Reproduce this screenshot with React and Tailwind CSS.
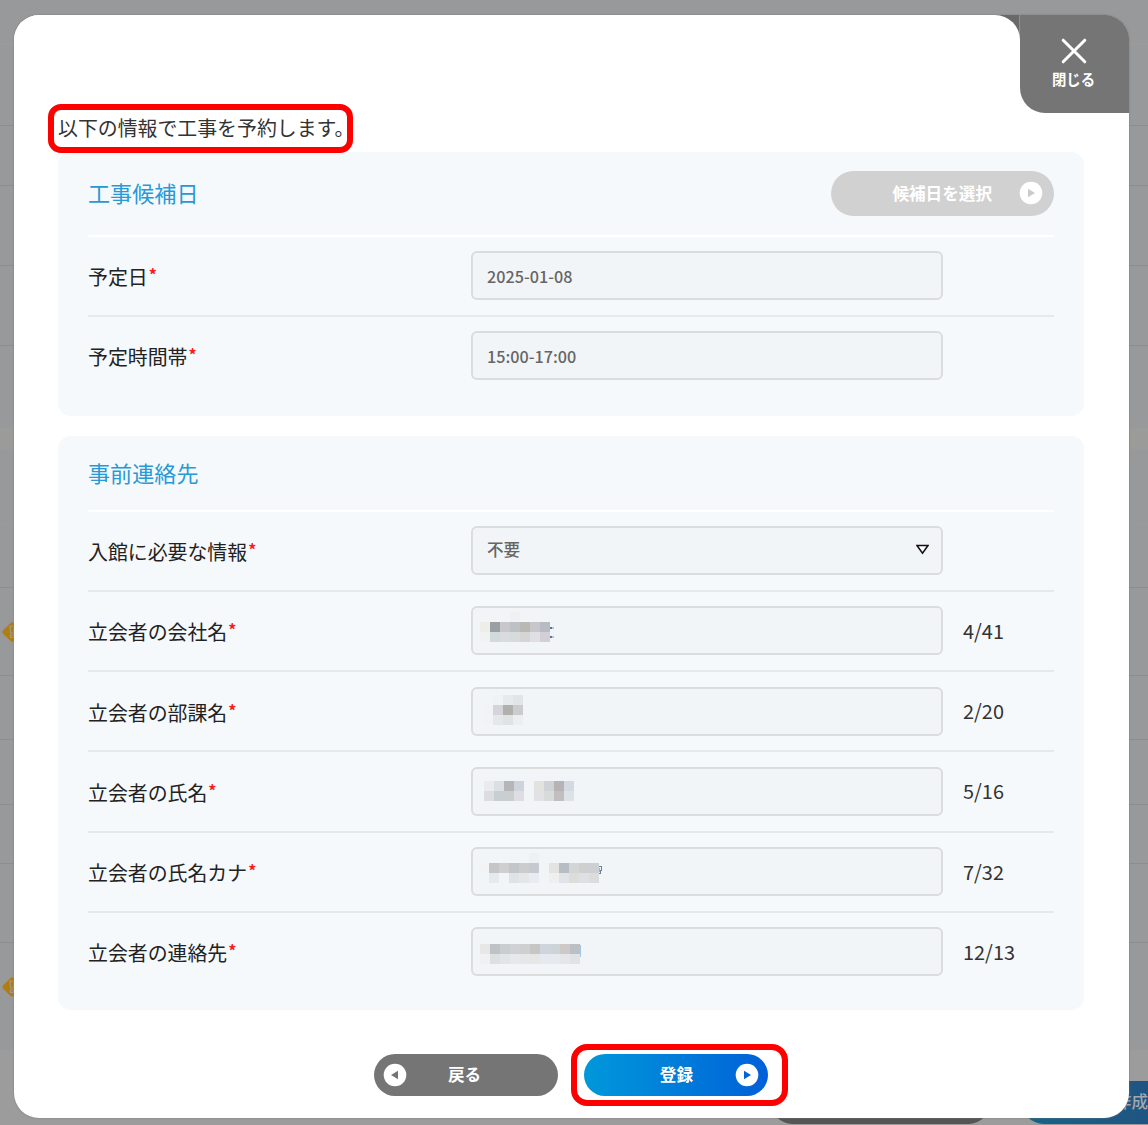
import React from 'react';

const backdropLines = [125, 185, 265, 345, 587, 675, 739, 804, 863, 942];

const Arrow = ({ left, color }) => (
  <svg width="24" height="24" viewBox="0 0 24 24" className="shrink-0">
    <circle cx="12" cy="12" r="11.3" fill="#fff" />
    <path d={left ? 'M8 12 L15 7.8 V16.2 Z' : 'M16 12 L9 7.8 V16.2 Z'} fill={color} />
  </svg>
);

const Warning = () => (
  <svg width="24" height="24" viewBox="0 0 24 24">
    <rect x="4.6" y="4.6" width="14.8" height="14.8" rx="2" transform="rotate(45 12 12)" fill="#b07d12" />
    <path d="M10 6h4l-.6 7h-2.8z M10.5 15h3v2.5h-3z" fill="none" stroke="#a29a86" strokeWidth="1.2" />
  </svg>
);

// Each mosaic row is a list of 10px cells; an empty string leaves the cell clear.
const company = {
  x: 7, y: 4,
  rows: [
    ['', '#f3f4f6', '', '#eef2f5', '', '', ''],
    ['#eeede8', '#9a9fa1', '#c8c8ca', '#bdc1c6', '#bab8b3', '#c7c7cb', '#b8bac4'],
    ['#f1f3f2', '#d4dadb', '#d8dcdc', '#d8dbdb', '#d5d6d4', '#e0e0e4', '#d2d0d6'],
  ],
  tail: (
    <>
      <path d="M70 15.5h3M70 24.5h3" stroke="#686f86" strokeWidth="2" />
      <path d="M72 15.5h1.5M72 24.5h2" stroke="#a8c9ed" strokeWidth="2" />
    </>
  ),
};
const department = {
  x: 10, y: 6,
  rows: [
    ['', '#f0f3f6', '#e7eaed', '#e1e5e8'],
    ['#f1f3f6', '#d5d4da', '#b0b0ad', '#c9cdce'],
    ['#f1f3f6', '#e4e8eb', '#dfe3e3', '#ebeff1'],
  ],
};
const person = {
  x: 11, y: 12,
  rows: [
    ['#e9ebed', '#dae0e3', '#b5b6b8', '#cfd3dc', '', '#e2e3df', '#cdd3d8', '#b6b3b2', '#d3dae2'],
    ['#dddde0', '#c9ced1', '#c9ced1', '#dddde3', '', '#e0e2e3', '#d7dbda', '#c1bebf', '#dce2e6'],
  ],
};
const kana = {
  x: 6, y: 4,
  rows: [
    ['', '', '', '', '', '#edf1f4', '', '', '', '', '', ''],
    ['#f1f3f5', '#c6c6c7', '#cfcfd1', '#c3c6c9', '#cbccce', '#c6c9cf', '', '#e3e3e1', '#b8bcc3', '#d4d6d6', '#d0cfd0', '#cdd0d2'],
    ['', '#e6eaed', '', '#dee3e6', '#e4e6e8', '#e8ebf1', '', '#eeefef', '#e0e4e8', '#dcdddb', '#dfe0e4', '#dddcdd'],
  ],
  tail: (
    <>
      <path d="M120 13.5h2.5v3l-2 5" fill="none" stroke="#71809b" strokeWidth="1.4" />
      <path d="M120.8 14.5v4" stroke="#d5a66d" strokeWidth="1" />
    </>
  ),
};
const phone = {
  x: 7, y: 5,
  rows: [
    ['', '#f2f5f5', '', '', '', '', '', '', '', ''],
    ['#e7e7e5', '#bec2c7', '#c8cdcd', '#cfd1d5', '#d0cfcf', '#c6c6c4', '#cfd4df', '#ced3d7', '#cec9c7', '#bcc0c5'],
    ['#f0f1f3', '#dce0e1', '#e1e5e9', '#e7e8ec', '#e6e7e8', '#e5e7e5', '#e6e9ef', '#e6e9ee', '#e5e6e9', '#e1e2e4'],
  ],
  tail: <path d="M100.5 11v12" stroke="#9fc8e6" strokeWidth="1" />,
};

const Mosaic = ({ data }) => (
  <svg
    width="140" height="34"
    shapeRendering="crispEdges"
    style={{ marginLeft: data.x, marginTop: data.y }}
  >
    {data.rows.map((row, r) =>
      row.map((fill, c) => (fill ? <rect key={`${r}-${c}`} x={c * 10} y={r * 10} width="10" height="10" fill={fill} /> : null))
    )}
    {data.tail}
  </svg>
);

const Row = ({ label, value, mosaic, count, select, last }) => (
  <div className={`flex h-[80.25px] items-center ${last ? 'border-b-2 border-transparent' : 'border-b-2 border-[#e5e9eb]'}`}>
    <div className="flex w-[383px] pt-[3px] text-[19.9px] leading-7 text-[#222]">
      {label}<span className="-mt-[3px] ml-px text-[16px] font-bold leading-7 text-[#ff1a1a]">*</span>
    </div>
    <div className="h-[49px] w-[472px] rounded-[6px] border-2 border-[#dbdcdd] bg-[#f2f5f8]">
      {mosaic ? (
        <Mosaic data={mosaic} />
      ) : (
        <div className={`flex h-full items-center justify-between pl-[14px] pr-[12px] font-medium text-[#666] ${select ? 'pb-[3px] text-[16.6px]' : 'pt-px text-[16.2px]'}`}>
          <span>{value}</span>
          {select && (
            <svg width="13" height="11" viewBox="0 0 13 11">
              <path d="M1 1.5H12L6.5 9.2Z" fill="#fff" stroke="#111" strokeWidth="1.5" />
            </svg>
          )}
        </div>
      )}
    </div>
    {count && <div className="ml-5 text-[19.9px] leading-7 text-[#333]">{count}</div>}
  </div>
);

const Backdrop = () => (
  <div className="absolute inset-0 bg-[#98999b]">
    <div className="absolute inset-x-0 top-[44px] h-px bg-[#9c9c9d]" />
    <div className="absolute inset-x-0 top-[428px] h-[21px] bg-[#9b9b9a]" />
    <div className="absolute inset-x-0 top-[523px] h-px bg-[#9b9b9a]" />
    <div className="absolute inset-x-0 bottom-0 top-[1050px] bg-[#9c9c9c]" />
    {backdropLines.map((y) => (
      <div key={y} className="absolute inset-x-0 h-px bg-[#8c8d8f]" style={{ top: y }} />
    ))}
    <div className="absolute left-0 top-[620px]"><Warning /></div>
    <div className="absolute left-0 top-[975px]"><Warning /></div>
    <div className="absolute left-[771px] top-[1081px] h-[43px] w-[219px] rounded-full bg-[#555]" />
    <div className="absolute right-0 top-[1081px] flex h-[43px] w-[126px] items-center justify-end rounded-l-full bg-gradient-to-r from-[#176486] to-[#205482] pb-[3px] text-[16.6px] font-medium text-[#a0a8ae]">
      作成
    </div>
  </div>
);

export default function App() {
  return (
    <div className="relative h-[1125px] w-[1148px] overflow-hidden font-['Noto_Sans_CJK_JP',sans-serif]">
      <Backdrop />
      <div className="relative ml-[13.5px] pt-[15px]">
        <div className="relative h-[1102.5px] w-[1115.5px] overflow-hidden rounded-[25px] bg-white shadow-[0_0_2px_#777]">
          <div className="absolute right-0 top-0 flex h-[30px] w-[134px] justify-end bg-[#696969]">
            <div className="mr-[109px] w-px bg-[#909090]" />
          </div>
          <div className="absolute left-0 top-0 h-[40px] w-[1006px] rounded-tr-[25px] bg-white" />
          <button className="absolute right-0 top-0 flex h-[98px] w-[109px] flex-col items-center rounded-bl-[25px] bg-[#757575] pr-[2px] pt-[23px] text-white">
            <svg width="26" height="26" viewBox="0 0 26 26">
              <path d="M2.2 2.2L23.8 23.8M23.8 2.2L2.2 23.8" stroke="#fff" strokeWidth="3" strokeLinecap="round" />
            </svg>
            <span className="mt-[5px] text-[14.4px] font-bold leading-5">閉じる</span>
          </button>

          <div className="px-[44.5px] pt-[89px]">
            <div className="relative z-10 -ml-[10px] flex h-[49px] w-[305px] items-center whitespace-nowrap rounded-[13px] border-[6px] border-[#ff0000] pb-[2px] pl-[4px] text-[19.9px] text-[#333]">
              以下の情報で工事を予約します。
            </div>
            <section className="-mt-[1px] h-[264px] w-[1026px] rounded-[13px] bg-[#f5f9fc] px-[30px]">
              <div className="flex h-[84.5px] items-center justify-between border-b-2 border-white">
                <h2 className="pb-px text-[22.1px] text-[#2899d7]">工事候補日</h2>
                <button className="flex h-[45px] w-[223px] items-center justify-end rounded-full bg-[#d1d1d1] pr-[11px] text-[16.6px] font-bold text-white">
                  <span className="mr-[27px]">候補日を選択</span>
                  <Arrow color="#cbcbcb" />
                </button>
              </div>
              <Row label="予定日" value="2025-01-08" />
              <Row label="予定時間帯" value="15:00-17:00" last />
            </section>

            <section className="mt-[19.5px] h-[574.5px] w-[1026px] rounded-[13px] bg-[#f5f9fc] px-[30px]">
              <div className="flex h-[76px] items-center border-b-2 border-white">
                <h2 className="text-[22.1px] text-[#2899d7]">事前連絡先</h2>
              </div>
              <Row label="入館に必要な情報" value="不要" select />
              <Row label="立会者の会社名" mosaic={company} count="4/41" />
              <Row label="立会者の部課名" mosaic={department} count="2/20" />
              <Row label="立会者の氏名" mosaic={person} count="5/16" />
              <Row label="立会者の氏名カナ" mosaic={kana} count="7/32" />
              <Row label="立会者の連絡先" mosaic={phone} count="12/13" last />
            </section>

            <div className="ml-[316px] mt-[34px] flex items-center gap-[13px]">
              <button className="mb-px flex h-[42px] w-[184px] items-center rounded-full bg-[#757575] pl-[9px] text-[16.6px] font-bold text-white">
                <Arrow left color="#757575" />
                <span className="ml-[41px]">戻る</span>
              </button>
              <div className="flex h-[62px] w-[217px] items-center rounded-[16px] border-[6px] border-[#ff0000] pb-px pl-[7px]">
                <button className="flex h-[42px] w-[184px] items-center justify-end rounded-full bg-gradient-to-r from-[#0098da] to-[#0060d8] pr-[9px] text-[16.6px] font-bold text-white">
                  <span className="mr-[42px]">登録</span>
                  <Arrow color="#0065d6" />
                </button>
              </div>
            </div>
          </div>
        </div>
      </div>
    </div>
  );
}
